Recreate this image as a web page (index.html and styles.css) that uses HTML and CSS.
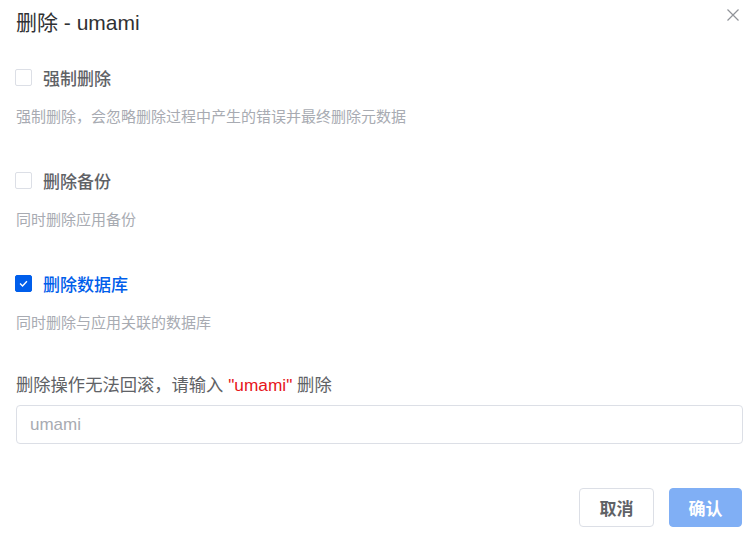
FILE: index.html
```html
<!DOCTYPE html>
<html lang="zh-CN">
<head>
<meta charset="utf-8">
<title>删除 - umami</title>
<link rel="stylesheet" href="styles.css">
</head>
<body>
<div class="dialog">
  <div class="header">
    <span class="title">删除 - umami</span>
    <button class="close" aria-label="关闭">
      <svg viewBox="0 0 12 12" width="12" height="12"><path d="M0.5 0.5 L11.5 11.5 M11.5 0.5 L0.5 11.5" stroke="#909399" stroke-width="1.2" fill="none"/></svg>
    </button>
  </div>
  <div class="body">
    <div class="item">
      <label class="check">
        <span class="box"></span>
        <span class="check-label">强制删除</span>
      </label>
      <div class="desc">强制删除，会忽略删除过程中产生的错误并最终删除元数据</div>
    </div>
    <div class="item">
      <label class="check">
        <span class="box"></span>
        <span class="check-label">删除备份</span>
      </label>
      <div class="desc">同时删除应用备份</div>
    </div>
    <div class="item">
      <label class="check checked">
        <span class="box">
          <svg viewBox="0 0 17 17" width="17" height="17"><path d="M4.6 8.6 L7.4 11.3 L12.4 5.9" stroke="#fff" stroke-width="1.5" fill="none"/></svg>
        </span>
        <span class="check-label">删除数据库</span>
      </label>
      <div class="desc">同时删除与应用关联的数据库</div>
    </div>
    <div class="confirm-label">删除操作无法回滚，请输入 <span class="red">"umami"</span> 删除</div>
    <input class="input" type="text" placeholder="umami">
  </div>
  <div class="footer">
    <button class="btn">取消</button>
    <button class="btn primary" disabled>确认</button>
  </div>
</div>
</body>
</html>
```

FILE: styles.css
```css
html, body {
  margin: 0;
  padding: 0;
  background: #fff;
}
body {
  font-family: "Liberation Sans", "Noto Sans CJK SC", sans-serif;
  color: #606266;
}
.dialog {
  position: relative;
  width: 755px;
  height: 534px;
  padding: 11px 13px 0 16px;
  box-sizing: border-box;
}
.header {
  height: 24px;
}
.title {
  font-size: 21px;
  line-height: 24px;
  color: #303133;
}
.close {
  position: absolute;
  top: 9px;
  right: 16px;
  width: 12px;
  height: 12px;
  padding: 0;
  border: 0;
  background: none;
  display: flex;
}
.body {
  display: flex;
  flex-direction: column;
  padding-top: 30px;
}
.item {
  display: flex;
  flex-direction: column;
  margin-bottom: 41px;
}
.check {
  display: flex;
  align-items: center;
  height: 24px;
  gap: 11px;
  margin-left: -1px;
}
.box {
  width: 17px;
  height: 17px;
  border: 1px solid #dcdfe6;
  border-radius: 2px;
  box-sizing: border-box;
  display: flex;
  align-items: center;
  justify-content: center;
}
.check-label {
  font-size: 17px;
  font-weight: 500;
  color: #606266;
}
.checked .box {
  background: #005eeb;
  border-color: #005eeb;
}
.checked .check-label {
  color: #005eeb;
}
.desc {
  margin-top: 18px;
  font-size: 15px;
  line-height: 20px;
  color: #a8abb2;
}
.confirm-label {
  font-size: 17.3px;
  line-height: 24px;
  color: #606266;
  margin-top: -1px;
}
.red {
  color: #e6161b;
}
.input {
  margin-top: 8px;
  height: 39px;
  width: 727px;
  box-sizing: border-box;
  border: 1px solid #dcdfe6;
  border-radius: 4px;
  padding: 0 13px;
  font-family: "Liberation Sans", "Noto Sans CJK SC", sans-serif;
  font-size: 17px;
  color: #606266;
  outline: none;
}
.input::placeholder {
  color: #a8abb2;
}
.footer {
  display: flex;
  justify-content: flex-end;
  gap: 15px;
  margin-top: 44px;
}
.btn {
  height: 39px;
  width: 75px;
  border: 1px solid #dcdfe6;
  border-radius: 4px;
  background: #fff;
  font-family: "Liberation Sans", "Noto Sans CJK SC", sans-serif;
  font-size: 17px;
  font-weight: 700;
  color: #606266;
  padding: 0;
}
.btn.primary {
  width: 73px;
  background: #80aff5;
  border-color: #80aff5;
  color: #fff;
}
```
